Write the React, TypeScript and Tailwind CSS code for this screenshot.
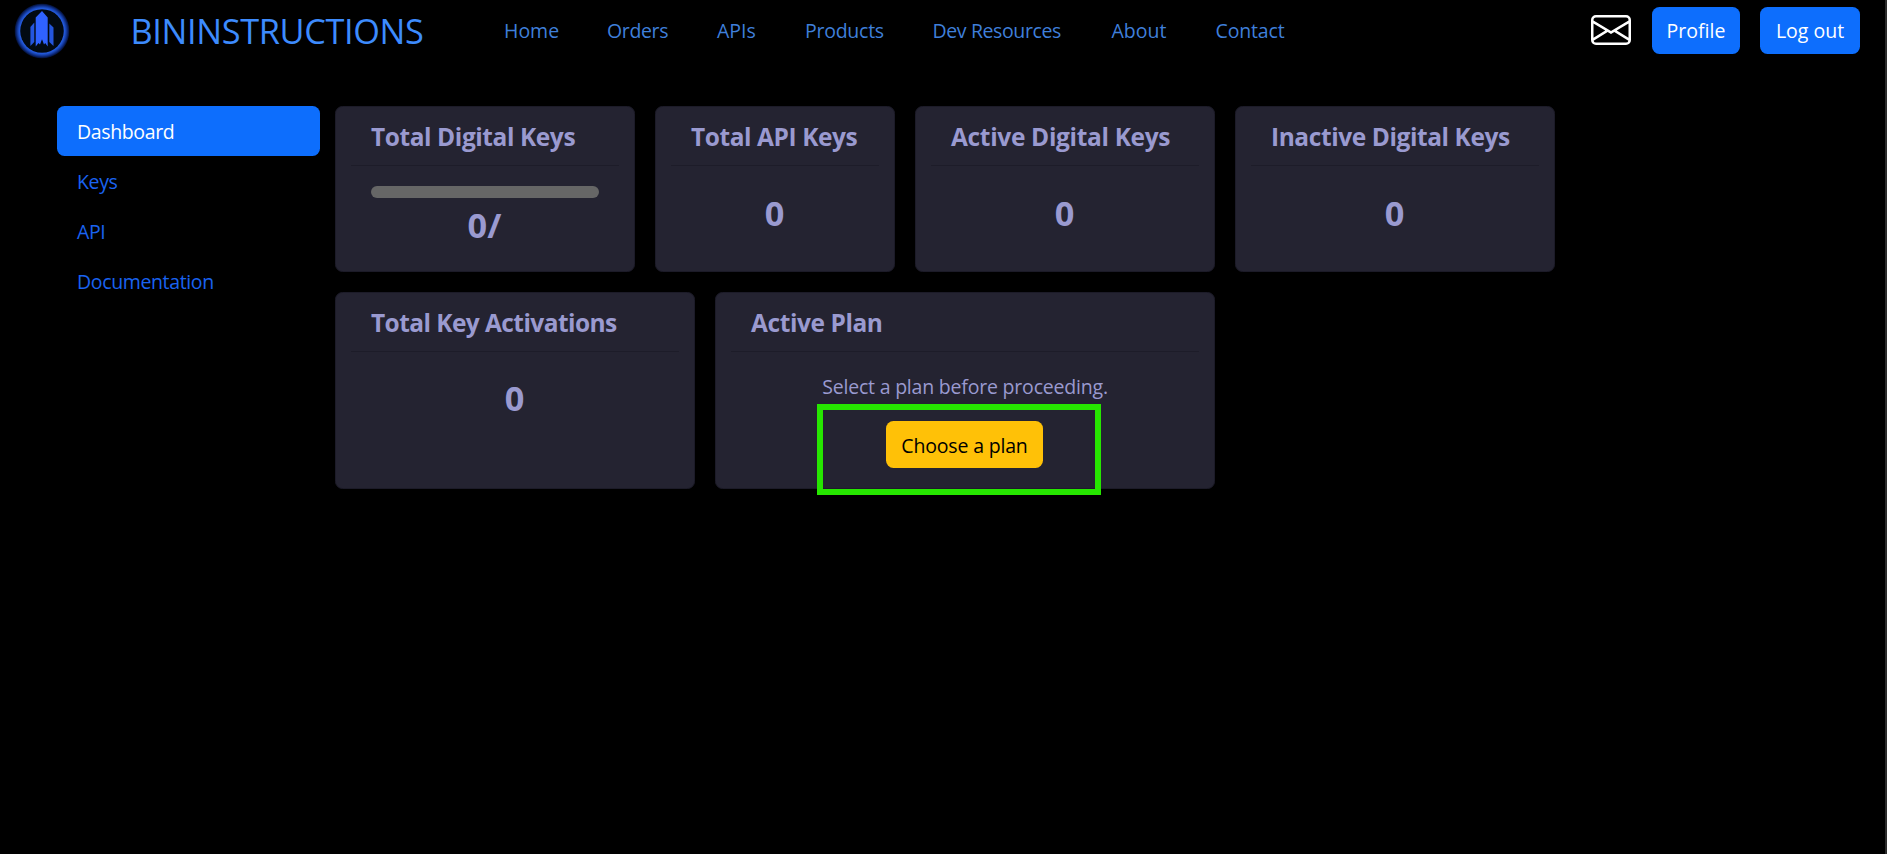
import type { ReactNode } from "react";
import { BsEnvelope } from "react-icons/bs";

const navItems = [
  { label: "Home", box: "w-[103px]" },
  { label: "Orders", box: "w-[110px] tracking-[-0.35px]" },
  { label: "APIs", box: "w-[88px]" },
  { label: "Products", box: "w-[127.5px] tracking-[-0.25px]" },
  { label: "Dev Resources", box: "w-[179px] tracking-[-0.38px]" },
  { label: "About", box: "w-[104px]" },
  { label: "Contact", box: "w-[80px] tracking-[-0.15px]" },
];

const sideItems = ["Dashboard", "Keys", "API", "Documentation"];

function Logo() {
  return (
    <svg viewBox="0 0 60 60" className="h-[60px] w-[60px]">
      <defs>
        <radialGradient id="glow" gradientUnits="userSpaceOnUse" cx="30" cy="30" r="28">
          <stop offset="0.77" stopColor="#2a62ee" />
          <stop offset="0.83" stopColor="#1d50c8" />
          <stop offset="0.9" stopColor="#0f2f88" />
          <stop offset="0.96" stopColor="#051440" />
          <stop offset="1" stopColor="#000000" stopOpacity="0" />
        </radialGradient>
      </defs>
      <circle cx="30" cy="30" r="28" fill="url(#glow)" />
      <circle cx="30" cy="30" r="21.8" fill="#020a12" />
      <path
        d="M30 10L35.7 16.5V45.5L33.2 42L32 43.5L30 38.2L28 43.5L26.5 42L23.7 45.5V16.5Z"
        fill="#2f62ff"
      />
      <path d="M22.3 21.5V41L18.4 45V26Z" fill="#2456dd" />
      <path d="M37.3 22.5L41.5 26.5V45L37.3 41Z" fill="#2456dd" />
    </svg>
  );
}

interface CardProps {
  title: string;
  width: string;
  tracking?: string;
  children: ReactNode;
}

function Card({ title, width, tracking = "tracking-[-0.42px]", children }: CardProps) {
  return (
    <section
      className={`${width} flex flex-col rounded-[7.5px] border border-[#1c1b28] bg-[#242331] text-[#9a9ad0]`}
    >
      <h2
        className={`${tracking} mx-[15px] h-[59px] border-b border-[#1d1c29] px-5 pt-[15px] text-[24.5px] leading-[30px] font-bold whitespace-nowrap`}
      >
        {title}
      </h2>
      <div className="flex flex-1 flex-col items-center px-[35px] pt-5">{children}</div>
    </section>
  );
}

function Count({ value, offset = "mt-[6px]" }: { value: string; offset?: string }) {
  return <p className={`${offset} pr-[1px] text-[34.3px] leading-[42px] font-bold`}>{value}</p>;
}

export default function App() {
  return (
    <div className="flex h-[854px] w-full overflow-hidden bg-black font-['Open_Sans','Noto_Sans',sans-serif] text-[19.5px] leading-[30px]">
      <div className="flex flex-1 flex-col">
        <header className="flex h-[62px] items-center pr-[25px] pl-[12px]">
          <Logo />
          <a className="ml-[58.5px] w-[373.5px] text-[34.3px] leading-[50px] tracking-[-0.35px] text-[#3d8bfd]">
            BININSTRUCTIONS
          </a>
          <nav className="flex flex-1 text-[#3f7fda]">
            {navItems.map((item) => (
              <a key={item.label} className={`${item.box} whitespace-nowrap`}>
                {item.label}
              </a>
            ))}
          </nav>
          <div className="mb-[1px] flex items-center">
            <BsEnvelope className="mr-[21px] mb-[1px] h-10 w-10 text-white" />
            <button className="mr-5 h-[47px] w-[88px] rounded-[7.5px] bg-[#0d6efd] pt-[1px] text-white">
              Profile
            </button>
            <button className="h-[47px] w-[100px] rounded-[7.5px] bg-[#0d6efd] pt-[1px] text-white">
              Log out
            </button>
          </div>
        </header>

        <div className="flex pt-11 pl-[57px]">
          <aside className="mr-[15px] flex w-[263px] flex-col tracking-[-0.36px]">
            {sideItems.map((label, i) => (
              <a
                key={label}
                className={
                  i === 0
                    ? "rounded-[7.5px] bg-[#0d6efd] px-5 pt-[11px] pb-[9px] text-white"
                    : "px-5 pt-[11px] pb-[9px] text-[#1a63f0]"
                }
              >
                {label}
              </a>
            ))}
          </aside>

          <main className="flex flex-col gap-5">
            <div className="flex h-[166px] gap-5">
              <Card title="Total Digital Keys" width="w-[300px]">
                <div className="h-3 w-full rounded-[6px] bg-[#666666]" />
                <p className="mt-[6px] pr-[1px] text-[34.3px] leading-[42px] font-bold">0/</p>
              </Card>
              <Card title="Total API Keys" width="w-[240px]">
                <Count value="0" />
              </Card>
              <Card title="Active Digital Keys" width="w-[300px]" tracking="tracking-[-0.33px]">
                <Count value="0" />
              </Card>
              <Card title="Inactive Digital Keys" width="w-[320px]">
                <Count value="0" />
              </Card>
            </div>
            <div className="flex h-[197px] gap-5">
              <Card title="Total Key Activations" width="w-[360px]" tracking="tracking-[-0.57px]">
                <Count value="0" offset="mt-[5px]" />
              </Card>
              <Card title="Active Plan" width="w-[500px]">
                <p className="tracking-[-0.2px]">Select a plan before proceeding.</p>
                <div className="relative mt-[19px] mr-[1px]">
                  <button className="block h-[47px] w-[157px] rounded-[7.5px] bg-[#ffc107] pt-[2px] tracking-[-0.17px] text-black">
                    Choose a plan
                  </button>
                  <div className="pointer-events-none absolute -top-[17px] -left-[69px] h-[91px] w-[284px] border-[6px] border-[#26e600]" />
                </div>
              </Card>
            </div>
          </main>
        </div>
      </div>
      <div className="w-[2px] bg-[#2c2c2c]" />
    </div>
  );
}
